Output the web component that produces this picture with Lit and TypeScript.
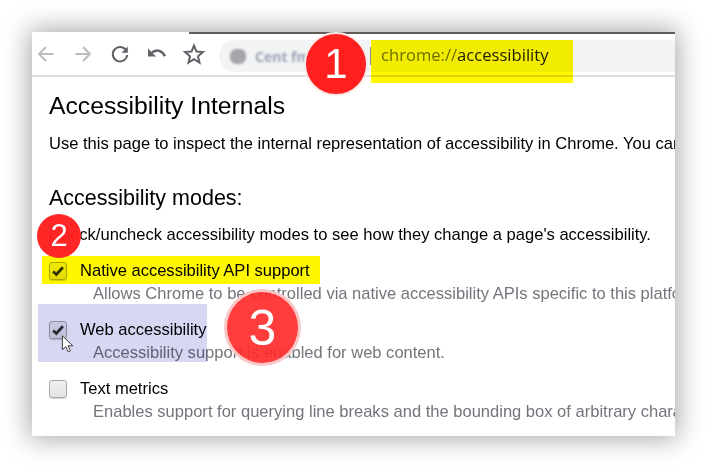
import { LitElement, html, css, svg } from "lit";
import { customElement } from "lit/decorators.js";

const mark = svg`<svg class="mark" viewBox="0 0 18 18"><path d="M3.500 9.500 L7.200 13 L14.500 4.800" fill="none" stroke="#333" stroke-width="3.200"/></svg>`;

@customElement("app-root")
export class AppRoot extends LitElement {
  static styles = css`
    :host { display: block; position: relative; width: 707px; height: 468px; overflow: hidden; background: #fff; font-family: "Liberation Sans", Arial, sans-serif; color: #000; }
    .stage { padding: 32px; height: 468px; box-sizing: border-box; }
    .win { position: relative; width: 643px; height: 404px; background: #fff; overflow: hidden; }
    .shadow { box-shadow: 0 0 24px 3px rgba(0,0,0,.34); width: 643px; height: 404px; }
    .topline { height: 2px; margin-left: 157px; background: #5f5b59; }
    .toolbar { display: flex; align-items: center; height: 41px; border-bottom: 2px solid #dcdce2; padding-left: 2px; }
    .ic { width: 24px; height: 24px; flex: none; display: block; }
    .nav { display: flex; gap: 13px; align-items: center; margin-top: -1px; margin-right: 13px; }
    .omni { flex: 1; height: 32px; margin-top: 3px; background: #f1f3f4; border-radius: 16px 0 0 16px; display: flex; align-items: center; padding-left: 11px; font-family: "Open Sans", sans-serif; font-size: 16.6px; color: #202124; }
    .blurred { display: flex; align-items: center; gap: 9px; filter: blur(1.2px); color: #9aa5b5; font-weight: 700; font-size: 14px; width: 140px; flex: none; white-space: nowrap; overflow: hidden; }
    .gear { width: 16px; height: 15px; background: #a3a5a9; border-radius: 40%; flex: none; }
    .sep { width: 1px; height: 18px; background: #8a8d91; margin-right: 10px; flex: none; }
    .url { white-space: nowrap; margin-top: -4px; }
    .scheme { color: #6f7378; }
    .page { padding: 0 0 0 17px; white-space: nowrap; }
    h1 { margin: 15px 0 0; font-size: 24.7px; line-height: 28px; font-weight: 400; }
    p { margin: 15px 0 0; font-size: 16.55px; line-height: 18px; }
    h2 { margin: 33px 0 0; font-size: 21.5px; line-height: 24px; font-weight: 400; }
    .lead { margin-top: 16px; }
    .mode { display: flex; align-items: center; gap: 13px; margin-top: 18px; font-size: 16.55px; line-height: 18px; }
    .box { width: 16px; height: 16px; flex: none; border: 1px solid #a9a9a9; border-radius: 3px; background: linear-gradient(#f0f0f0,#e3e3e3); box-shadow: 0 1px 1px rgba(0,0,0,.18); display: flex; align-items: center; justify-content: center; }
    .mark { width: 16px; height: 16px; }
    .desc { margin: 5px 0 0 44px; font-size: 16.55px; line-height: 18px; color: #72757b; }
    .hl { position: absolute; z-index: 6; mix-blend-mode: multiply; }
    .hl.y1 { left: 339px; top: 8px; width: 202px; height: 43px; background: #fff800; }
    .hl.y2 { left: 10px; top: 224px; width: 278px; height: 28px; background: #fff700; }
    .hl.b { left: 6px; top: 272px; width: 169px; height: 58px; background: #d6d7f2; }
    .badge { position: absolute; z-index: 8; border-radius: 50%; color: #fff; display: flex; align-items: center; justify-content: center; box-sizing: border-box; }
    .b1 { left: 272px; top: 0; width: 64px; height: 64px; background: #ff1f1f; font-size: 42px; border: 2px solid #fbeaea; }
    .b2 { left: 5px; top: 182px; width: 44px; height: 44px; background: rgba(255,31,31,.97); font-size: 31px; }
    .b3 { left: 192px; top: 257px; width: 77px; height: 77px; background: rgba(255,40,40,.9); font-size: 50px; border: 3px solid rgba(250,215,215,.9); }
    .cursor { position: absolute; z-index: 7; left: 29px; top: 303px; width: 14px; height: 19px; }
  `;

  render() {
    return html`<div class="stage"><div class="shadow"><div class="win">
      <div class="topline"></div>
      <div class="toolbar">
        <div class="nav">
          <svg class="ic" viewBox="0 0 24 24"><path d="M19.500 12H5.500M12 5l-7 7 7 7" fill="none" stroke="#bdbdbd" stroke-width="2"/></svg>
          <svg class="ic" viewBox="0 0 24 24"><path d="M4.500 12h14M12 5l7 7-7 7" fill="none" stroke="#bdbdbd" stroke-width="2"/></svg>
          <svg class="ic" viewBox="0 0 24 24"><path d="M18.200 8.500A7.200 7.200 0 1 0 19.200 13" fill="none" stroke="#5f6368" stroke-width="2"/><path d="M19.800 4.500v6.200h-6.200z" fill="#5f6368"/></svg>
          <svg class="ic" viewBox="0 0 24 24"><path d="M7 10.500c5-3.500 10-2.200 13 3.800" fill="none" stroke="#5f6368" stroke-width="2.400"/><path d="M3 6.500v8h8z" fill="#5f6368"/></svg>
          <svg class="ic" viewBox="0 0 24 24"><path d="M12 3.600l2.500 6 6.400.5-4.900 4.200 1.500 6.300L12 17.200l-5.500 3.400 1.500-6.300-4.900-4.200 6.400-.5z" fill="none" stroke="#5f6368" stroke-width="2"/></svg>
        </div>
        <div class="omni">
          <div class="blurred"><span class="gear"></span><span>Cent fm</span></div>
          <span class="sep"></span>
          <span class="url"><span class="scheme">chrome://</span>accessibility</span>
        </div>
      </div>
      <div class="page">
        <h1>Accessibility Internals</h1>
        <p>Use this page to inspect the internal representation of accessibility in Chrome. You can</p>
        <h2>Accessibility modes:</h2>
        <p class="lead">Check/uncheck accessibility modes to see how they change a page's accessibility.</p>
        <div class="mode"><span class="box">${mark}</span><span>Native accessibility API support</span></div>
        <div class="desc">Allows Chrome to be controlled via native accessibility APIs specific to this platform.</div>
        <div class="mode"><span class="box">${mark}</span><span>Web accessibility</span></div>
        <div class="desc">Accessibility support is enabled for web content.</div>
        <div class="mode"><span class="box"></span><span>Text metrics</span></div>
        <div class="desc">Enables support for querying line breaks and the bounding box of arbitrary characters.</div>
      </div>
      <div class="hl y1"></div>
      <div class="hl y2"></div>
      <div class="hl b"></div>
      <div class="badge b1">1</div>
      <div class="badge b2">2</div>
      <div class="badge b3">3</div>
      <svg class="cursor" viewBox="0 0 16 22"><path d="M1.500 1v16l4-3.500 2.700 6 2.600-1.200-2.700-5.800h5.400z" fill="#fff" stroke="#222" stroke-width="1"/></svg>
    </div></div></div>`;
  }
}
